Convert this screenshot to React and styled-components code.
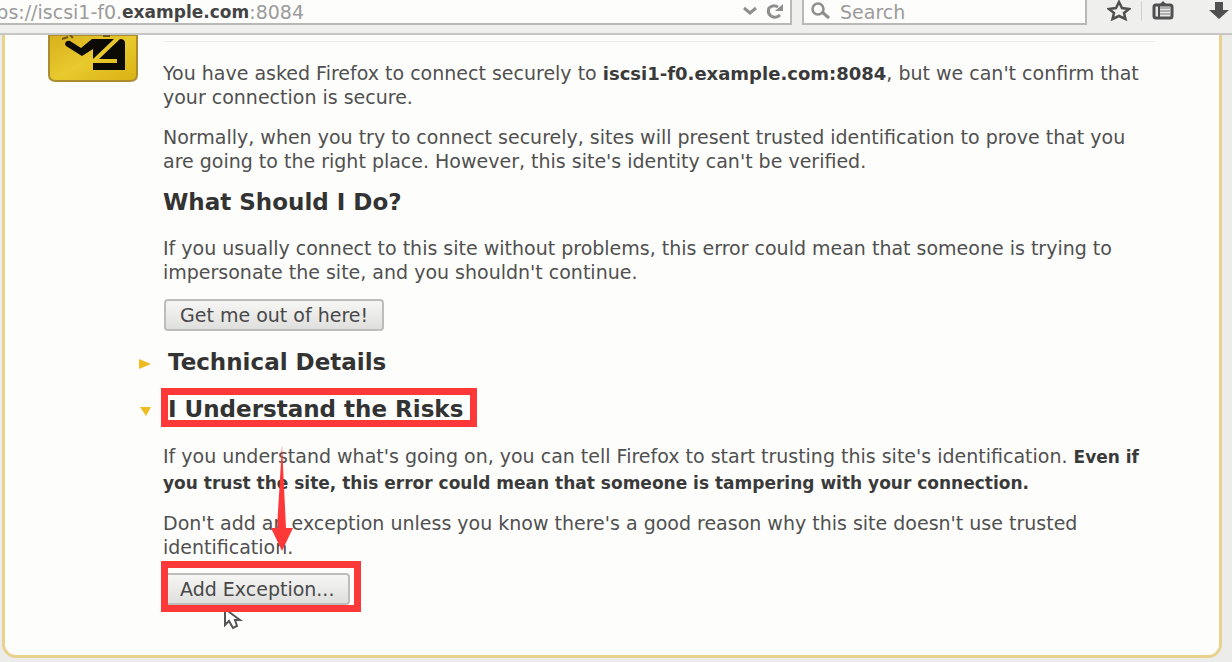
import React from "react";
import styled, { createGlobalStyle } from "styled-components";

const RED = "#fd3838";

const Global = createGlobalStyle`
  * { box-sizing: border-box; }
  body { margin: 0; background: #ececea; color: #505050; font-family: "DejaVu Sans", sans-serif; font-size: 19px; line-height: 24px; }
  p, h2 { margin: 0; }
`;
const Page = styled.div`
  overflow: hidden;
`;
const Toolbar = styled.header`
  display: flex;
  align-items: flex-start;
  height: 35px;
  background: #efefee;
  border-bottom: 2px solid #c6c6c4;
`;
const Address = styled.div`
  flex: 1;
  display: flex;
  align-items: center;
  justify-content: space-between;
  height: 25px;
  background: #fdfdfc;
  border: solid #b9b9b8;
  border-width: 0 2px 2px 0;
`;
const Url = styled.div`
  display: flex;
  justify-content: flex-end;
  width: 304px;
  overflow: hidden;
  white-space: nowrap;
  color: #9b9b9b;
  b { color: #444; font-size: 17px; }
`;
const Tools = styled.div`
  display: flex;
  align-items: center;
  gap: 8px;
  padding-right: 6px;
`;
const IconButton = styled.button`
  display: flex;
  padding: 0;
  border: 0;
  background: none;
  color: ${(p) => p.$color || "#505050"};
`;
const Search = styled.label`
  display: flex;
  align-items: center;
  gap: 8px;
  width: 285px;
  height: 25px;
  margin-left: 10px;
  padding-left: 6px;
  background: #fdfdfc;
  border: solid #b9b9b8;
  border-width: 0 2px 2px 2px;
  color: #9b9b9b;
  svg { flex: none; }
  input { width: 100%; min-width: 0; padding: 0; border: 0; outline: 0; background: none; font: inherit; color: inherit; }
  input::placeholder { color: #9b9b9b; opacity: 1; }
`;
const Actions = styled.div`
  display: flex;
  align-items: center;
  height: 22px;
  padding: 0 2px 0 20px;
  gap: 10px;
`;
const Divider = styled.span`
  width: 1px;
  height: 20px;
  background: #cfcfcf;
`;
const Download = styled(IconButton)`
  margin-left: 24px;
`;
const Card = styled.main`
  display: grid;
  grid-template-columns: 90px minmax(0, 1fr);
  column-gap: 24px;
  margin: 0 10px 3px 2px;
  padding: 0 64px 50px 43px;
  background: #fdfdfb;
  border: solid #e9d28e;
  border-width: 0 3px 3px 3px;
  border-radius: 0 0 14px 14px;
`;
const Content = styled.div`
  padding: 6px 0 0 1px;
`;
const Rule = styled.hr`
  margin: 0 0 19px;
  border: 0;
  border-top: 1px solid #ececea;
`;
const Para = styled.p`
  margin-bottom: ${(p) => p.$gap || 16}px;
  line-height: ${(p) => p.$lead || 24}px;
`;
const Strong = styled.b`
  font-size: ${(p) => p.$size}px;
  line-height: 1;
  color: #3a3a3a;
`;
const Heading = styled.h2`
  position: relative;
  width: fit-content;
  margin-bottom: 20px;
  margin-left: ${(p) => (p.$toggle ? 5 : 0)}px;
  font-size: 23px;
  line-height: 27px;
  color: #333;
`;
const Toggle = styled.button`
  display: flex;
  align-items: center;
  gap: 16px;
  margin-left: -30px;
  padding: 0;
  border: 0;
  background: none;
  font: inherit;
  color: inherit;
`;
const PushButton = styled.button`
  display: block;
  height: 32px;
  margin: 0 0 ${(p) => p.$gap || 0}px 1px;
  padding: 0 14px;
  border: 2px solid #bdbdbb;
  border-radius: 4px;
  background: linear-gradient(#f6f6f5, #dfdfde);
  font: inherit;
  color: #484848;
  white-space: nowrap;
`;
const Marked = styled.div`
  position: relative;
  width: fit-content;
`;
const Frame = styled.span`
  position: absolute;
  inset: ${(p) => p.$inset};
  border: 7px solid ${RED};
  pointer-events: none;
`;
const Arrow = styled.svg`
  position: absolute;
  left: 108px;
  bottom: 54px;
`;
const Cursor = styled.svg`
  position: absolute;
  left: 60px;
  top: 35px;
`;

const Officer = () => (
  <svg width="90" height="50" viewBox="0 0 90 50" aria-hidden="true">
    <defs>
      <linearGradient id="tile" x1="0" y1="0" x2="1" y2="1">
        <stop offset="0" stopColor="#d9b01c" />
        <stop offset="0.5" stopColor="#e8c92e" />
        <stop offset="1" stopColor="#d9b212" />
      </linearGradient>
    </defs>
    <path d="M1 0V40Q1 46 8 46H82Q89 46 89 40V0Z" fill="url(#tile)" stroke="#ab8c30" strokeWidth="2" />
    <path d="M14 4L20 2M22 0L25 3M55 1H62" fill="none" stroke="#6b5a18" strokeWidth="2" />
    <path d="M17 9Q18 5 22 6L33 13L44 4H66L45 24V14L34 21L18 11Z" fill="#0b0a05" />
    <path d="M72 4Q77 4 77 8V35H45V28H69V24H51Z" fill="#0b0a05" />
  </svg>
);

export default function App() {
  return (
    <Page>
      <Global />
      <Toolbar>
        <Address>
          <Url role="textbox" aria-label="Address"><span>ps://iscsi1-f0.</span><b>example.com</b><span>:8084</span></Url>
          <Tools>
            <IconButton aria-label="History" $color="#8e8e8e"><svg width="16" height="16" viewBox="0 0 16 16" fill="none" stroke="currentColor" strokeWidth="3"><path d="M2 4L8 9L14 4" /></svg></IconButton>
            <IconButton aria-label="Reload" $color="#8e8e8e"><svg width="18" height="18" viewBox="0 0 18 18"><path d="M12 4Q7 1 3 5Q1 10 5 13Q10 16 14 12" fill="none" stroke="currentColor" strokeWidth="3" /><path d="M17 1V8H9Z" fill="currentColor" /></svg></IconButton>
          </Tools>
        </Address>
        <Search>
          <svg width="22" height="20" viewBox="0 0 22 20" fill="none" stroke="#8e8e8e"><circle cx="8" cy="7" r="5.500" strokeWidth="2.500" /><path d="M12 10L19 16" strokeWidth="3" /></svg>
          <input aria-label="Search" placeholder="Search" />
        </Search>
        <Actions>
          <IconButton aria-label="Bookmark"><svg width="24" height="22" viewBox="0 0 24 22"><path d="M12 2L15 8L22 9L17 13L18.500 19L12 16L5.500 19L7 13L2 9L9 8Z" fill="none" stroke="currentColor" strokeWidth="2.500" /></svg></IconButton>
          <Divider />
          <IconButton aria-label="Bookmarks list"><svg width="22" height="20" viewBox="0 0 22 20"><rect x="2" y="4" width="18" height="13" rx="2" fill="#e8e8e8" stroke="currentColor" strokeWidth="3" /><path d="M11 0L15 4H7Z" fill="currentColor" /><path d="M7 4V17" stroke="currentColor" strokeWidth="2" /><path d="M8 7H18M8 10H18M8 13H18" stroke="#777" strokeWidth="1" /></svg></IconButton>
          <Download aria-label="Downloads"><svg width="22" height="20" viewBox="0 0 22 20"><path d="M7 1H15V9H21L11 18L1 9H7Z" fill="currentColor" /></svg></Download>
        </Actions>
      </Toolbar>
      <Card>
        <Officer />
        <Content>
          <Rule />
          <Para>You have asked Firefox to connect securely to <Strong $size={18}>iscsi1-f0.example.com:8084</Strong>, but we can't confirm that your connection is secure.</Para>
          <Para>Normally, when you try to connect securely, sites will present trusted identification to prove that you are going to the right place. However, this site's identity can't be verified.</Para>
          <Heading>What Should I Do?</Heading>
          <Para $gap={15}>If you usually connect to this site without problems, this error could mean that someone is trying to impersonate the site, and you shouldn't continue.</Para>
          <PushButton $gap={18}>Get me out of here!</PushButton>
          <Heading $toggle>
            <Toggle aria-expanded="false"><svg width="14" height="14" viewBox="0 0 14 14"><path d="M1 3L13 8L1 13Z" fill="#eebc22" /></svg>Technical Details</Toggle>
          </Heading>
          <Heading $toggle>
            <Toggle aria-expanded="true"><svg width="14" height="14" viewBox="0 0 14 14"><path d="M2 4H13L8 13Z" fill="#eebc22" /></svg>I Understand the Risks</Toggle>
            <Frame $inset="-8px -14px -4px -7px" />
          </Heading>
          <Para $lead={26}>If you understand what's going on, you can tell Firefox to start trusting this site's identification. <Strong $size={17}>Even if you trust the site, this error could mean that someone is tampering with your connection.</Strong></Para>
          <Para $gap={14}>Don't add an exception unless you know there's a good reason why this site doesn't use trusted identification.</Para>
          <Marked>
            <PushButton>Add Exception...</PushButton>
            <Cursor width="20" height="24" viewBox="0 0 20 24"><path d="M2 1V17L6 13L10 20L14 18L12 12H17Z" fill="#fff" stroke="#555" strokeWidth="2" /></Cursor>
            <Frame $inset="-12px -11px -7px -2px" />
            <Arrow width="22" height="106" viewBox="0 0 22 106"><path d="M11 0L15 83H22L11 106L0 83H6Z" fill={RED} /></Arrow>
          </Marked>
        </Content>
      </Card>
    </Page>
  );
}
